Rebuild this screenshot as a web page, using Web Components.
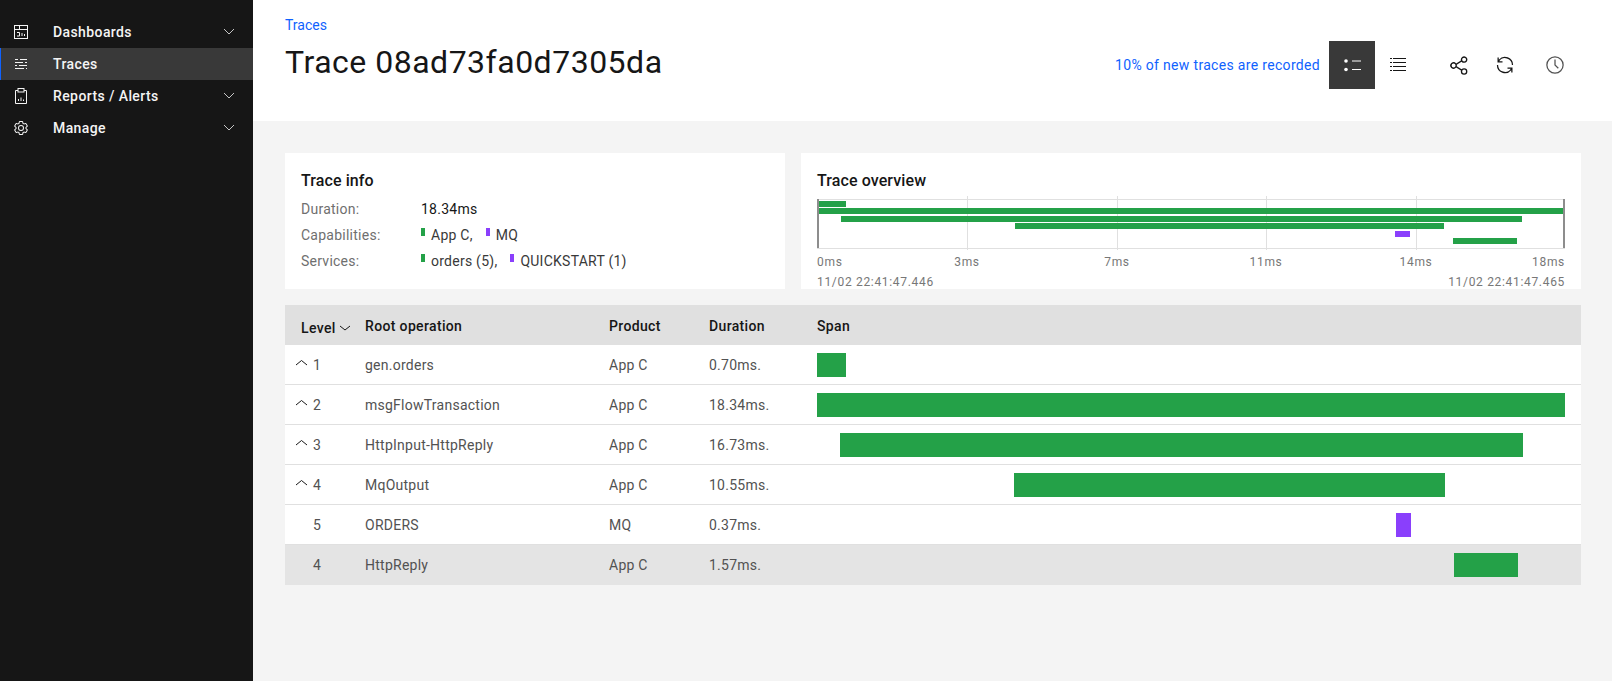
<!DOCTYPE html>
<html><head><meta charset="utf-8"><style>
html,body{margin:0;height:100%}
body{font-family:"Roboto","Noto Sans",sans-serif;color:#161616;overflow:hidden}
</style></head><body>
<trace-app>
<side-nav slot="nav">
<nav-item icon="dash" chevron>Dashboards</nav-item>
<nav-item icon="traces" active>Traces</nav-item>
<nav-item icon="report" chevron>Reports / Alerts</nav-item>
<nav-item icon="gear" chevron>Manage</nav-item>
</side-nav>
<page-header></page-header>
<main-area>
<trace-info></trace-info>
<trace-overview></trace-overview>
<span-table></span-table>
</main-area>
</trace-app>
<script>
const FONT='font-family:"Roboto","Noto Sans",sans-serif;';
const icons={
dash:'<svg width="16" height="16" viewBox="0 0 16 16" fill="none" stroke="#f4f4f4"><rect x="1.5" y="1.5" width="13" height="13"/><path d="M1.5 5.500h13M6.500 1.500v4M4 8.500h2.500v3.500H4M9 9v3M11.500 10v2"/></svg>',
traces:'<svg width="16" height="16" viewBox="0 0 16 16" fill="none" stroke="#f4f4f4"><path d="M2 3.500h3M7 3.500h7M2 6.500h8M12 6.500h2M2 9.500h2M6 9.500h8M2 12.500h9M13 12.500h1"/></svg>',
report:'<svg width="16" height="16" viewBox="0 0 16 16" fill="none" stroke="#f4f4f4"><path d="M5 2.500H2.500v13h11v-13H11"/><rect x="5" y=".5" width="6" height="3.500"/><path d="M5.500 13v-2M8 13V9.500M10.500 13v-1.500"/></svg>',
gear:'<svg width="16" height="16" viewBox="0 0 32 32" fill="#f4f4f4"><path d="M27 16.76V15.24l1.92-1.68A2 2 0 0 0 29.3 11l-2.36-4a2 2 0 0 0-1.73-1 2 2 0 0 0-.64.1l-2.43.82a11.35 11.35 0 0 0-1.31-.75l-.51-2.52a2 2 0 0 0-2-1.61h-4.68a2 2 0 0 0-2 1.61l-.51 2.52a11.48 11.48 0 0 0-1.32.75l-2.38-.86A2 2 0 0 0 6.79 6a2 2 0 0 0-1.73 1L2.7 11a2 2 0 0 0 .41 2.51L5 15.24v1.52l-1.89 1.68A2 2 0 0 0 2.7 21l2.36 4a2 2 0 0 0 1.73 1 2 2 0 0 0 .64-.1l2.43-.82a11.35 11.35 0 0 0 1.31.75l.51 2.52a2 2 0 0 0 2 1.61h4.72a2 2 0 0 0 2-1.61l.51-2.52a11.48 11.48 0 0 0 1.32-.75l2.42.82a2 2 0 0 0 .64.1 2 2 0 0 0 1.73-1l2.28-4a2 2 0 0 0-.41-2.51zM25.21 24l-3.43-1.16a8.86 8.86 0 0 1-2.71 1.57L18.36 28h-4.72l-.71-3.55a9.36 9.36 0 0 1-2.7-1.57L6.79 24l-2.36-4 2.72-2.4a8.9 8.9 0 0 1 0-3.13L4.43 12l2.36-4 3.43 1.16a8.86 8.86 0 0 1 2.71-1.57L13.64 4h4.72l.71 3.55a9.36 9.36 0 0 1 2.7 1.57L25.21 8l2.36 4-2.72 2.4a8.9 8.9 0 0 1 0 3.13L27.57 20z"/><path d="M16 22a6 6 0 1 1 6-6 5.94 5.94 0 0 1-6 6zm0-10a3.91 3.91 0 0 0-4 4 3.91 3.91 0 0 0 4 4 3.91 3.91 0 0 0 4-4 3.91 3.91 0 0 0-4-4z"/></svg>'
};
const def=(n,html)=>{customElements.define(n,class extends HTMLElement{
 connectedCallback(){if(this.shadowRoot)return;this.attachShadow({mode:'open'}).innerHTML=typeof html==='function'?html(this):html;}
});};

def('trace-app',`<style>:host{display:grid;grid-template-columns:253px 1fr;grid-template-rows:121px 1fr;width:1612px;height:681px;background:#f4f4f4}
.n{grid-row:1/3;background:#161616}</style>
<div class="n"><slot name="nav"></slot></div><slot></slot>`);

def('side-nav',`<style>:host{display:block;padding-top:16px}</style><slot></slot>`);

def('nav-item',h=>`<style>:host{display:flex;align-items:center;height:32px;${FONT}font-size:14px;font-weight:500;letter-spacing:.4px;color:#f4f4f4;position:relative}
:host([active]){background:#393939;box-shadow:inset 1px 0 0 #0f62fe}
.i{width:16px;height:16px;margin-left:13px;margin-right:24px;display:flex}
.c{position:absolute;left:223px;top:10px}</style>
<span class="i">${icons[h.getAttribute('icon')]}</span><slot></slot>
${h.hasAttribute('chevron')?'<svg class="c" width="12" height="12" viewBox="0 0 12 12" fill="none" stroke="#c6c6c6"><path d="M1 3l5 5 5-5"/></svg>':''}`);

def('page-header',`<style>:host{display:flex;background:#fff;padding:0 32px;justify-content:space-between;${FONT}}
.bc{font-size:14px;color:#0f62fe;line-height:18px;margin-top:16px}
h1{font-size:32px;font-weight:400;margin:8px 0 0;line-height:40px;letter-spacing:.5px;color:#161616}
.r{display:flex;align-items:flex-start;margin-top:41px;margin-right:-2px}
.t{font-size:14px;color:#0f62fe;margin-right:9px;line-height:48px;letter-spacing:.32px}
.b{width:46px;height:48px;display:flex;align-items:center;justify-content:center}
.on{background:#393939}
.g{width:54px}</style>
<div><div class="bc">Traces</div><h1>Trace 08ad73fa0d7305da</h1></div>
<div class="r"><span class="t">10% of new traces are recorded</span>
<span class="b on"><svg width="18" height="16" viewBox="0 0 18 16"><circle cx="3" cy="4" r="1.800" fill="#fff"/><circle cx="3" cy="12.500" r="1.800" fill="#fff"/><path d="M9 4h9M9 12.500h9" stroke="#fff"/></svg></span>
<span class="b" style="margin-right:15px"><svg width="16" height="16" viewBox="0 0 16 16" fill="none" stroke="#161616"><path d="M3 1.500h13M3 5.500h13M3 9.500h13M3 13.500h13M0 1.500h2M0 5.500h2M0 9.500h2M0 13.500h2"/></svg></span>
<span class="b"><svg width="21" height="21" viewBox="0 0 32 32" fill="#161616"><path d="M23 20a5 5 0 0 0-3.89 1.89L11.8 17.32a4.46 4.46 0 0 0 0-2.64l7.31-4.57A5 5 0 1 0 18 7a4.79 4.79 0 0 0 .2 1.32l-7.31 4.57a5 5 0 1 0 0 6.22l7.31 4.57A4.79 4.79 0 0 0 18 25a5 5 0 1 0 5-5zm0-16a3 3 0 1 1-3 3 3 3 0 0 1 3-3zM7 19a3 3 0 1 1 3-3 3 3 0 0 1-3 3zm16 9a3 3 0 1 1 3-3 3 3 0 0 1-3 3z"/></svg></span>
<span class="b"><svg width="20" height="20" viewBox="0 0 32 32" fill="#161616"><path d="M12 10H6.78A11 11 0 0 1 27 16h2A13 13 0 0 0 6 7.68V4H4v8h8zM20 22h5.22A11 11 0 0 1 5 16H3a13 13 0 0 0 23 8.32V28h2v-8h-8z"/></svg></span>
<span class="b g"><svg width="20" height="20" viewBox="0 0 32 32" fill="#525252"><path d="M20.59 22L15 16.41V7h2v8.58l5 5.01L20.59 22z"/><path d="M16 30a14 14 0 1 1 14-14 14 14 0 0 1-14 14zm0-26a12 12 0 1 0 12 12A12 12 0 0 0 16 4z"/></svg></span>
</div>`);

def('main-area',`<style>:host{display:grid;grid-template-columns:500px 780px;column-gap:16px;grid-template-rows:136px auto;row-gap:16px;padding:32px 31px 0 32px;align-content:start;${FONT}}
::slotted(span-table){grid-column:1/3}</style><slot></slot>`);

const dot=c=>`<i style="display:inline-block;width:4px;height:8px;background:${c};margin-right:6px;vertical-align:4px"></i>`;
const G='#24a148',P='#8a3ffc';
def('trace-info',`<style>:host{display:block;background:#fff;padding:17px 16px 0;font-size:14px;letter-spacing:.25px;color:#161616}
h3{font-size:16px;font-weight:500;margin:0 0 4px;line-height:22px;letter-spacing:.1px}
.r{display:flex;height:26px;line-height:26px}.k{width:120px;color:#6f6f6f}.v span{margin-right:13px;color:#393939}</style>
<h3>Trace info</h3>
<div class="r"><div class="k">Duration:</div><div class="v" style="color:#161616">18.34ms</div></div>
<div class="r"><div class="k">Capabilities:</div><div class="v"><span>${dot(G)}App C,</span><span>${dot(P)}MQ</span></div></div>
<div class="r"><div class="k">Services:</div><div class="v"><span>${dot(G)}orders (5),</span><span>${dot(P)}QUICKSTART (1)</span></div></div>`);

const ob=[[1,1,28,G],[1,8,746,G],[24,16,681,G],[198,23,429,G],[578,31,15,P],[636,38,64,G]];
const ticks=[150,300,449,599];
def('trace-overview',`<style>:host{display:block;background:#fff;padding:17px 16px 0;font-size:12px;color:#777;letter-spacing:.68px}
h3{font-size:16px;font-weight:500;margin:0 0 7px;line-height:22px;color:#161616;letter-spacing:.1px}
.c{position:relative;border-top:1px solid #e0e0e0;border-bottom:1px solid #e0e0e0;width:748px;box-sizing:border-box;height:50px}
.e{position:absolute;top:-1px;bottom:0;width:2px;background:#8d8d8d}
.t{position:absolute;top:-4px;bottom:-2px;width:1px;background:#e0e0e0}
.b{position:absolute;height:6px}
.l{position:relative;height:16px;width:748px;margin-top:5px;line-height:16px}
.l span{position:absolute;transform:translateX(-50%);white-space:nowrap}
.l span:first-child{left:0;transform:none}.l span:last-child{right:0;transform:none}
.d{display:flex;justify-content:space-between;width:748px;line-height:16px;margin-top:4px}</style>
<h3>Trace overview</h3>
<div class="c">
${ticks.map(x=>`<div class="t" style="left:${x}px"></div>`).join('')}
${ob.map(b=>`<div class="b" style="left:${b[0]}px;top:${b[1]}px;width:${b[2]}px;background:${b[3]}"></div>`).join('')}
<div class="e" style="left:0"></div><div class="e" style="right:0"></div></div>
<div class="l"><span>0ms</span>${['3ms','7ms','11ms','14ms'].map((s,i)=>`<span style="left:${ticks[i]}px">${s}</span>`).join('')}<span>18ms</span></div>
<div class="d"><span>11/02 22:41:47.446</span><span>11/02 22:41:47.465</span></div>`);

const rows=[[1,'gen.orders','App C','0.70ms.',0,29,G,1],[2,'msgFlowTransaction','App C','18.34ms.',0,748,G,1],[3,'HttpInput-HttpReply','App C','16.73ms.',23,683,G,1],[4,'MqOutput','App C','10.55ms.',197,431,G,1],[5,'ORDERS','MQ','0.37ms.',579,15,P,0],[4,'HttpReply','App C','1.57ms.',637,64,G,0]];
def('span-table',`<style>:host{display:block;font-size:14px;letter-spacing:.25px;color:#525252}
.r{display:grid;grid-template-columns:80px 244px 100px 108px 1fr;height:40px;align-items:center;box-sizing:border-box;border-bottom:1px solid #e0e0e0;background:#fff;position:relative}
.h{background:#e0e0e0;font-weight:500;color:#161616;border:0;padding-top:2px;letter-spacing:.35px}
.s{background:#e4e4e4;border:0}
.b{position:absolute;top:8px;height:24px}
.lv{display:flex;align-items:center;padding-left:11px;gap:6px}.lv i{width:11px}
.hl{padding-left:16px;padding-top:3px;display:flex;align-items:center;gap:3px}</style>
<div class="r h"><div class="hl">Level<svg width="12" height="12" viewBox="0 0 12 12" fill="none" stroke="#161616"><path d="M1 4l5 4 5-4"/></svg></div><div>Root operation</div><div>Product</div><div>Duration</div><div>Span</div></div>
${rows.map((r,i)=>`<div class="r${i==5?' s':''}"><div class="lv"><i>${r[7]?'<svg width="11" height="8" viewBox="0 0 11 8" fill="none" stroke="#161616" style="display:block;margin-top:-4px"><path d="M0 6l5.500-4.500L11 6"/></svg>':''}</i><span>${r[0]}</span></div><div>${r[1]}</div><div>${r[2]}</div><div>${r[3]}</div><div></div><div class="b" style="left:${532+r[4]}px;width:${r[5]}px;background:${r[6]}"></div></div>`).join('')}`);
</script>
</body></html>
